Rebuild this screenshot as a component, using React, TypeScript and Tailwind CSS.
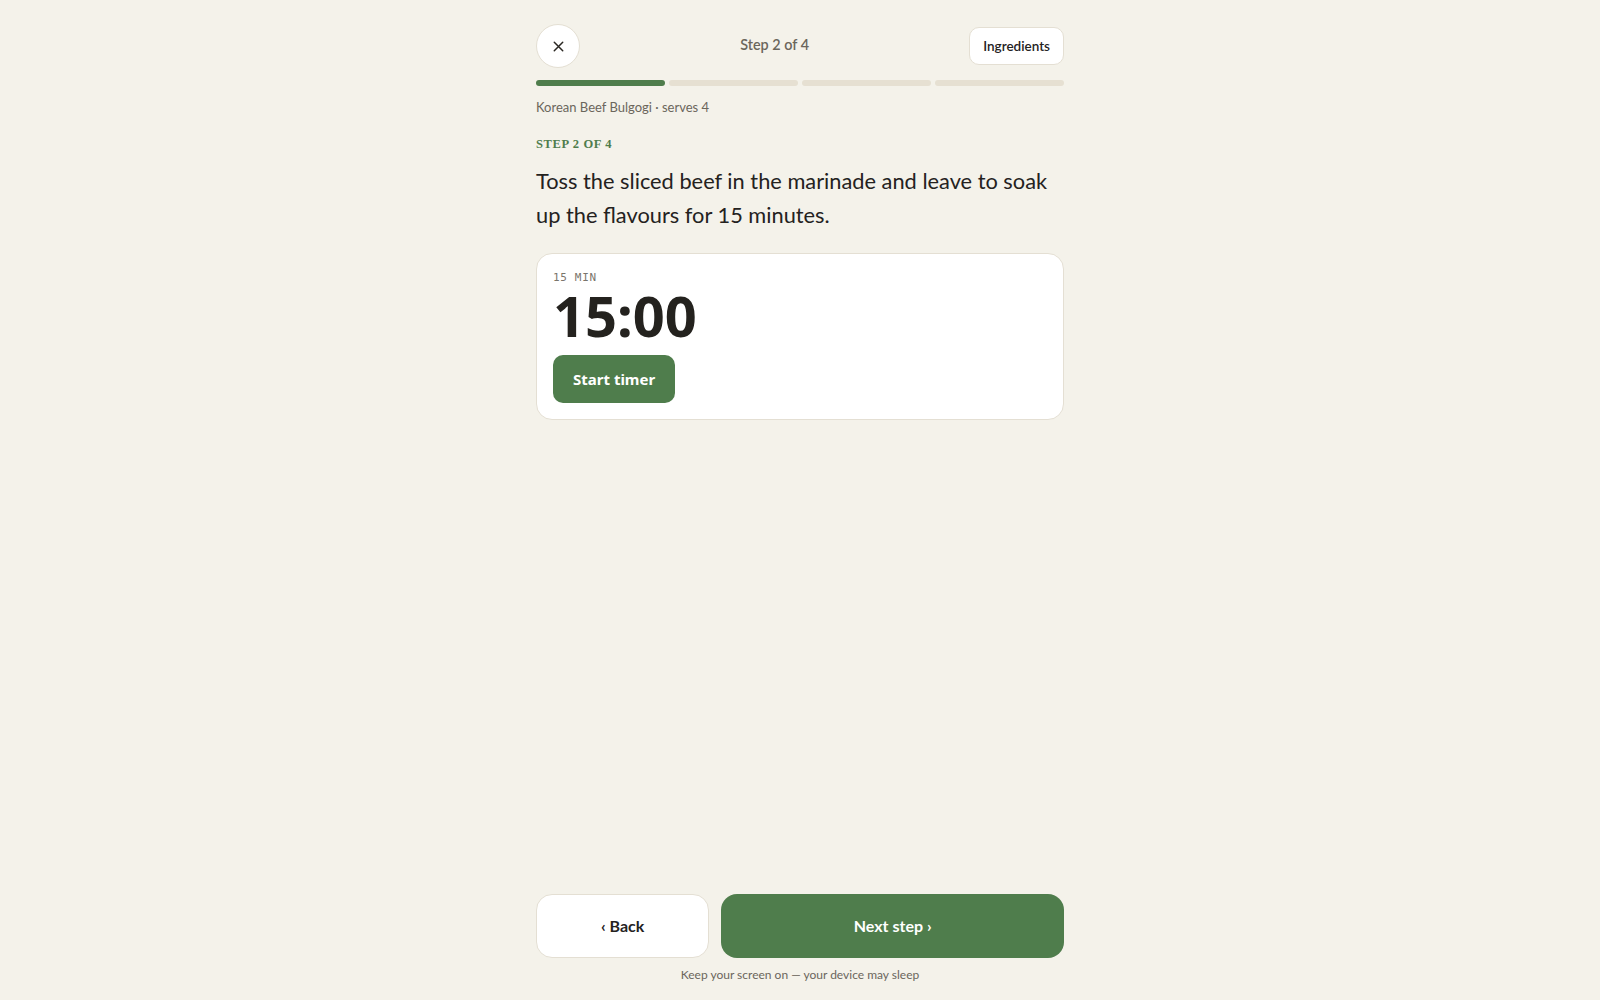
import React from "react";

const body = { fontFamily: "Lato, 'Noto Sans', sans-serif" };
const sys = { fontFamily: "'Noto Sans', 'Open Sans', sans-serif" };
const serif = { fontFamily: "'Liberation Serif', 'DejaVu Serif', serif" };
const mono = { fontFamily: "'DejaVu Sans Mono', 'Liberation Mono', monospace" };

function CloseIcon() {
  return (
    <svg width="15" height="15" viewBox="0 0 16 16" fill="none" stroke="#2a2722" strokeWidth="1.6" strokeLinecap="round">
      <path d="M3.5 3.5l9 9M12.5 3.5l-9 9" />
    </svg>
  );
}

export default function App() {
  const steps = [true, false, false, false];
  return (
    <div className="min-h-screen bg-[#f4f2ea] flex justify-center text-[#24221e]" style={body}>
      <div className="w-[528px] min-h-screen flex flex-col pt-6 pb-[17px]">
        {/* top bar */}
        <div className="flex items-center justify-between h-11">
          <button className="w-11 h-11 rounded-full bg-white border border-[#e4dfd3] flex items-center justify-center">
            <CloseIcon />
          </button>
          <div className="mb-[3px] text-[14.4px] font-semibold text-[#6b665c]">Step 2 of 4</div>
          <button className="h-[38px] px-[13px] rounded-[10px] bg-white border border-[#e4dfd3] text-[13.5px] font-semibold text-[#24221e]">
            Ingredients
          </button>
        </div>

        {/* progress */}
        <div className="mt-3 flex gap-1">
          {steps.map((done, i) => (
            <div key={i} className={done ? "flex-1 h-1.5 rounded-full bg-[#4f7d4c]" : "flex-1 h-1.5 rounded-full bg-[#e6e0d2]"} />
          ))}
        </div>

        <div className="mt-[11px] text-[13px] leading-5 text-[#6b665c]">Korean Beef Bulgogi · serves 4</div>

        <div className="mt-[19px] text-[12.5px] leading-4 font-bold tracking-[0.05em] text-[#4f7d4c]" style={serif}>
          STEP 2 OF 4
        </div>

        <p className="mt-3 text-[21.8px] leading-[34px] text-[#24221e]">
          Toss the sliced beef in the marinade and leave to soak up the flavours for 15 minutes.
        </p>

        {/* timer card */}
        <div className="mt-[21px] bg-white border border-[#e4dfd3] rounded-2xl px-4 pt-[16px] pb-[16px]">
          <div className="text-[11px] leading-4 tracking-[0.06em] text-[#7a756b]" style={mono}>
            15 MIN
          </div>
          <div className="mt-[1px] text-[56px] leading-[56px] font-bold text-[#24221e]" style={sys}>
            15:00
          </div>
          <button className="mt-[12px] h-12 px-5 rounded-[10px] bg-[#4f7d4c] text-white text-[15px] font-bold" style={sys}>
            Start timer
          </button>
        </div>

        <div className="flex-1" />

        {/* bottom nav */}
        <div className="flex gap-3">
          <button className="flex-1 h-16 rounded-2xl bg-white border border-[#e4dfd3] text-[16px] font-bold text-[#24221e]">
            ‹ Back
          </button>
          <button className="flex-[2] h-16 rounded-2xl bg-[#4f7d4c] text-[16px] font-bold text-white">
            Next step ›
          </button>
        </div>
        <div className="mt-[9px] text-center text-[12px] leading-4 text-[#6b665c]">
          Keep your screen on — your device may sleep
        </div>
      </div>
    </div>
  );
}
